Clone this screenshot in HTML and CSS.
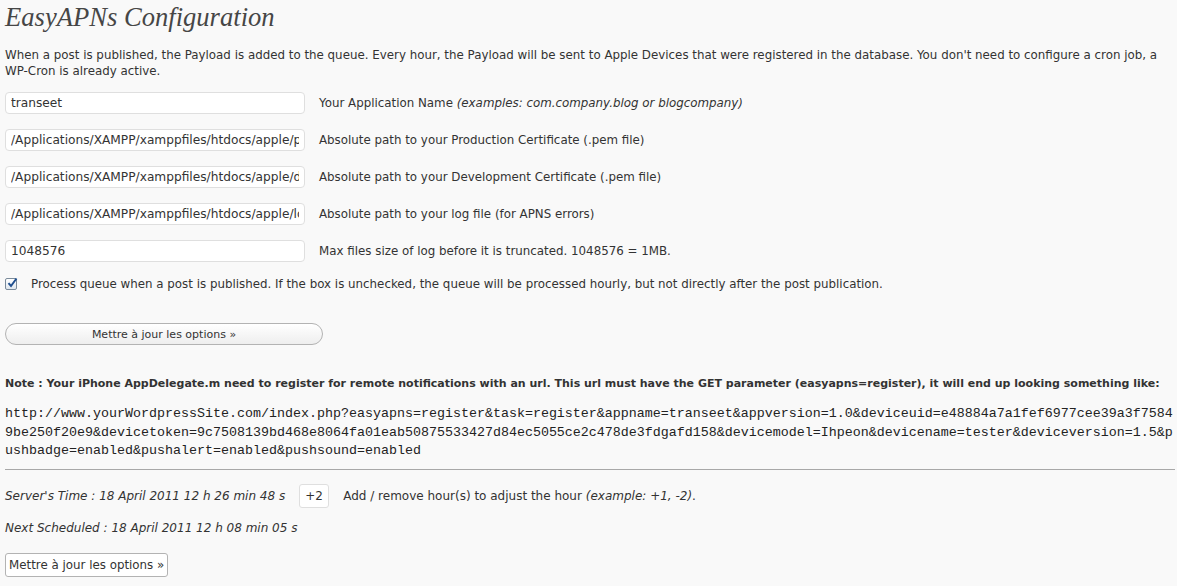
FILE: index.html
```html
<!DOCTYPE html>
<html>
<head>
<meta charset="utf-8">
<link rel="stylesheet" href="styles.css">
</head>
<body>
<div class="wrap">
  <h2 class="title">EasyAPNs Configuration</h2>
  <p class="intro">When a post is published, the Payload is added to the queue. Every hour, the Payload will be sent to Apple Devices that were registered in the database. You don't need to configure a cron job, a WP-Cron is already active.</p>

  <div class="row">
    <input class="field" type="text" value="transeet">
    <span class="label">Your Application Name <em>(examples: com.company.blog or blogcompany)</em></span>
  </div>
  <div class="row">
    <input class="field" type="text" value="/Applications/XAMPP/xamppfiles/htdocs/apple/production.pem">
    <span class="label">Absolute path to your Production Certificate (.pem file)</span>
  </div>
  <div class="row">
    <input class="field" type="text" value="/Applications/XAMPP/xamppfiles/htdocs/apple/development.pem">
    <span class="label">Absolute path to your Development Certificate (.pem file)</span>
  </div>
  <div class="row">
    <input class="field" type="text" value="/Applications/XAMPP/xamppfiles/htdocs/apple/log.txt">
    <span class="label">Absolute path to your log file (for APNS errors)</span>
  </div>
  <div class="row">
    <input class="field" type="text" value="1048576">
    <span class="label">Max files size of log before it is truncated. 1048576 = 1MB.</span>
  </div>
  <div class="check-row">
    <span class="checkbox"><svg width="12" height="12" viewBox="0 0 12 12"><path d="M2.5 6.2 L5 9 L10.5 1.5" fill="none" stroke="#1f4f8f" stroke-width="2"/></svg></span>
    <span class="label">Process queue when a post is published. If the box is unchecked, the queue will be processed hourly, but not directly after the post publication.</span>
  </div>

  <div class="submit-row">
    <button class="pill">Mettre à jour les options »</button>
  </div>

  <p class="note">Note : Your iPhone AppDelegate.m need to register for remote notifications with an url. This url must have the GET parameter (easyapns=register), it will end up looking something like:</p>
  <p class="code">http://www.yourWordpressSite.com/index.php?easyapns=register&amp;task=register&amp;appname=transeet&amp;appversion=1.0&amp;deviceuid=e48884a7a1fef6977cee39a3f75849be250f20e9&amp;devicetoken=9c7508139bd468e8064fa01eab50875533427d84ec5055ce2c478de3fdgafd158&amp;devicemodel=Ihpeon&amp;devicename=tester&amp;deviceversion=1.5&amp;pushbadge=enabled&amp;pushalert=enabled&amp;pushsound=enabled</p>

  <hr class="sep">

  <div class="time-row">
    <em class="time">Server's Time : 18 April 2011 12 h 26 min 48 s</em>
    <input class="small-field" type="text" value="+2">
    <span class="label">Add / remove hour(s) to adjust the hour <em>(example: +1, -2)</em>.</span>
  </div>
  <div class="next-row">
    <em class="time">Next Scheduled : 18 April 2011 12 h 08 min 05 s</em>
  </div>
  <div class="submit-row2">
    <button class="rect">Mettre à jour les options »</button>
  </div>
</div>
</body>
</html>
```

FILE: styles.css
```css
html, body {
  margin: 0;
  padding: 0;
  background: #f9f9f9;
}
body {
  font-family: "DejaVu Sans", "Lucida Grande", sans-serif;
  font-size: 11.85px;
  color: #333;
}
.wrap {
  padding: 0 2px 0 5px;
}
.title {
  margin: 0;
  padding-top: 2px;
  font-family: "Liberation Serif", Georgia, serif;
  font-style: italic;
  font-weight: normal;
  font-size: 26.6px;
  line-height: 30px;
  color: #464646;
}
.intro {
  margin: 15px 0 0;
  line-height: 16px;
}
.row {
  display: flex;
  align-items: center;
  gap: 14px;
  height: 22px;
  margin-top: 15px;
}
.intro + .row { margin-top: 13px; }
.field {
  box-sizing: border-box;
  width: 300px;
  height: 22px;
  margin: 0;
  padding: 0 5px;
  border: 1px solid #dfdfdf;
  border-radius: 4px;
  background: #fff;
  font-family: "DejaVu Sans", sans-serif;
  font-size: 12.2px;
  color: #333;
  outline: none;
}
.label em { font-style: italic; }
.check-row {
  display: flex;
  align-items: center;
  gap: 14px;
  margin-top: 14px;
  height: 16px;
}
.checkbox {
  box-sizing: border-box;
  width: 12px;
  height: 12px;
  border: 1px solid #7a8a9a;
  border-radius: 2px;
  background: linear-gradient(#ffffff, #dfe6ee);
  display: flex;
  align-items: center;
  justify-content: center;
  position: relative;
}
.checkbox svg {
  position: absolute;
  left: 0;
  top: -2px;
}
.submit-row {
  margin-top: 31px;
}
.pill {
  box-sizing: border-box;
  width: 318px;
  height: 22px;
  margin: 0;
  border: 1px solid #b3b3b3;
  border-radius: 11px;
  background: linear-gradient(#ffffff, #eeeeee);
  font-family: "DejaVu Sans", sans-serif;
  font-size: 11px;
  color: #333;
  padding: 0;
}
.note {
  margin: 31px 0 0;
  font-weight: bold;
  font-size: 11px;
  line-height: 16px;
  white-space: nowrap;
}
.code {
  margin: 13px 0 0;
  font-family: "Liberation Mono", "Courier New", monospace;
  font-size: 13.333px;
  line-height: 18.5px;
  word-break: break-all;
  color: #222;
}
.sep {
  margin: 8px 0 0;
  border: 0;
  border-top: 1px solid #a8a8a8;
  height: 0;
}
.time-row {
  display: flex;
  align-items: center;
  margin-top: 14px;
  height: 25px;
  font-size: 12px;
}
.time {
  font-style: italic;
}
.small-field {
  box-sizing: border-box;
  width: 30px;
  height: 24px;
  margin: 0 14px 0 14px;
  padding: 0 5px;
  border: 1px solid #dfdfdf;
  border-radius: 3px;
  background: #fff;
  font-family: "DejaVu Sans", sans-serif;
  font-size: 12px;
  color: #333;
  outline: none;
}
.next-row {
  margin-top: 11px;
  line-height: 16px;
  font-size: 12px;
}
.submit-row2 {
  margin-top: 17px;
}
.rect {
  box-sizing: border-box;
  height: 24px;
  margin: 0;
  padding: 0 3px;
  border: 1px solid #b3b3b3;
  border-radius: 3px;
  background: #fff;
  font-family: "DejaVu Sans", sans-serif;
  font-size: 11.85px;
  color: #333;
}
```
